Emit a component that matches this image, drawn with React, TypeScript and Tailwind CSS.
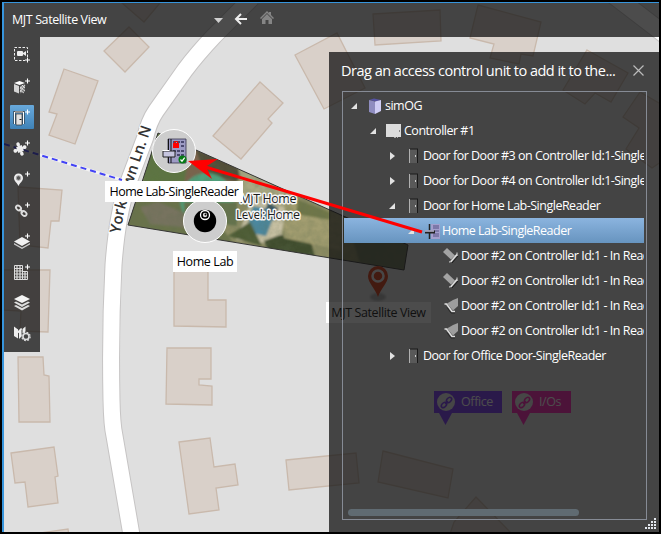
import React from "react";

const buildings = [
  "129,27 149,47 125,72 104,51",
  "122,3 160,3 144,22",
  "64,69 98,81 75,144 49,135 57,114 49,112",
  "18,187 62,190 59,221 51,221 48,248 20,245",
  "4,270 50,270 48,332 20,331 21,311 4,310",
  "18,357 43,357 44,375 49,376 50,422 19,422",
  "11,453 54,447 58,476 55,477 58,503 28,507 25,482 15,483",
  "40,533 68,529 69,536",
  "174,262 208,262 208,300 226,300 226,327 174,326",
  "167,348 211,348 211,379 199,379 199,385 212,386 212,405 166,404",
  "179,442 210,438 214,467 235,464 238,485 216,488 219,510 189,514",
  "286,460 356,453 359,483 289,490",
  "383,451 453,469 448,498 378,482",
  "476,497 512,534 450,534 454,522",
  "260,82 283,103 268,119 272,123 241,159 213,136",
  "295,55 337,33 365,88 324,109",
  "373,14 440,10 441,41 375,45",
  "478,5 541,22 533,56 521,54 519,64 490,58 494,44 470,38",
  "587,50 628,73 611,102 595,93 585,104 563,90",
  "640,92 664,106 664,160 652,168 626,149 639,128 623,117",
];

const road =
  "M252 -2 L214 36 Q197 54 185 70 L156 111 Q149 121 145 138 L127 186 Q117 217 113.500 265 Q110 330 111.500 400 Q112 425 114.500 436 L132 538";

function MapCanvas() {
  return (
    <svg className="absolute inset-0" width="661" height="534" viewBox="0 0 661 534">
      <defs>
        <clipPath id="lot"><path d="M158 133 408 245 404 270 128 225Z" /></clipPath>
        <filter id="soft"><feGaussianBlur stdDeviation="1.300" /></filter>
        <filter id="grass" x="0" y="0" width="100%" height="100%">
          <feTurbulence type="fractalNoise" baseFrequency="0.13" numOctaves="3" seed="4" />
          <feColorMatrix values="0 0 0 0 0.12  0 0 0 0 0.16  0 0 0 0 0.08  1.8 1.2 0 0 -1.1" />
        </filter>
        <path id="street" d="M120 234 L124 213 L132 186 L152 126" />
      </defs>
      <rect width="661" height="534" fill="#dfdfdf" />
      <g fill="#d9d0c9" stroke="#c9b9ac" strokeWidth="1.300">
        {buildings.map((p) => <polygon key={p} points={p} />)}
      </g>
      <path d="M612 -6 680 46" stroke="#c5c3c3" strokeWidth="19" />
      <path d="M612 -6 680 46" stroke="#fff" strokeWidth="17" />
      <path d={road} fill="none" stroke="#c6c4c4" strokeWidth="18" />
      <path d={road} fill="none" stroke="#fff" strokeWidth="16" />
      <path d="M4 144 122 180" stroke="#fff" strokeWidth="3" opacity=".6" />
      <path d="M4 144 122 180" stroke="#4343f5" strokeWidth="2" strokeDasharray="6 4" />
      <g clipPath="url(#lot)">
        <rect x="120" y="130" width="290" height="142" fill="#8d8c63" />
        <g filter="url(#soft)">
          <path d="M150 130 200 150 195 190 140 200Z" fill="#5d7543" />
          <path d="M128 200 200 200 235 245 128 226Z" fill="#6a734c" />
          <path d="M140 207 158 202 190 215 190 228 150 224Z" fill="#77735f" />
          <path d="M190 146 236 165 232 196 184 186Z" fill="#7d634e" />
          <path d="M196 150 245 170 236 182 204 172Z" fill="#514e38" />
          <path d="M238 166 300 190 288 215 244 200Z" fill="#a9a883" />
          <path d="M252 198 286 208 280 245 236 240Z" fill="#c6bfa2" />
          <path d="M253 206 276 211 266 236 246 232Z" fill="#4b88a0" />
          <path d="M268 202 278 208 275 221 264 214Z" fill="#3a5862" />
          <path d="M228 236 250 222 262 246Z" fill="#4d5c36" />
          <path d="M264 241 280 235 310 238 315 258 268 250Z" fill="#3f4d2e" />
          <path d="M285 200 345 215 340 250 284 238Z" fill="#a29d6f" />
          <path d="M298 200 330 212 330 220 296 214Z" fill="#6f774a" />
          <circle cx="207" cy="200" r="27" fill="#48ab86" opacity=".85" />
          <path d="M184 202h53v24l-53-8z" fill="#65734e" />
          <path d="M345 215 410 245 404 270 360 263Z" fill="#6c7554" />
        </g>
        <rect x="120" y="130" width="290" height="142" filter="url(#grass)" opacity=".22" />
      </g>
      <path d="M158 133 408 245 404 270 128 225Z" fill="none" stroke="#363636" />
      <text className="font-['Open_Sans']" fontSize="15" fontWeight="600" fill="#333" stroke="#fff" strokeWidth="2" paintOrder="stroke">
        <textPath href="#street" textLength="111" lengthAdjust="spacingAndGlyphs">Yorktown Ln. N</textPath>
      </text>
      <g className="font-['Open_Sans']" fontSize="12.500" fill="#1c1c1c" stroke="#f4f4f4" strokeWidth="3" paintOrder="stroke" strokeLinejoin="round" textAnchor="middle">
        <text x="268" y="203" textLength="57">MJT Home</text>
        <text x="268" y="219" textLength="64">Level: Home</text>
      </g>
      <ellipse cx="378" cy="297" rx="8" ry="4" fill="#aaa" filter="url(#soft)" />
      <path d="M378 297C375 288 368 283 368 276a10 10 0 0 1 20 0C388 283 381 288 378 297Z" fill="#d83812" />
      <circle cx="378" cy="276" r="5.500" fill="none" stroke="#ececec" strokeWidth="2.500" />
    </svg>
  );
}

function Links({ size = 14 }: { size?: number }) {
  return (
    <svg width={size} height={size} viewBox="0 0 14 14" fill="none" stroke="currentColor" strokeWidth="1.700">
      <ellipse cx="4.300" cy="9.700" rx="3.300" ry="2.200" transform="rotate(-45 4.300 9.700)" />
      <ellipse cx="9.700" cy="4.300" rx="3.300" ry="2.200" transform="rotate(-45 9.700 4.300)" />
      <path d="m5.500 8.500 3-3" />
    </svg>
  );
}

function LinkPin({ text, box, tail }: { text: string; box: string; tail: string }) {
  return (
    <div className={`absolute top-[391px] flex h-[22px] items-center pl-[3px] text-[12.5px] text-white ${box}`}>
      <span className="flex size-[18px] items-center justify-center rounded-full bg-[#e5e5e5]"><Links size={13} /></span>
      <span className="pt-px pl-[6px] tracking-[-0.4px] text-white">{text}</span>
      <svg className={`absolute top-[22px] left-[5px] ${tail}`} width="13" height="12"><path d="M0 0h13L6.500 12Z" fill="currentColor" /></svg>
    </div>
  );
}

function Markers() {
  return (
    <>
      <div className="absolute top-[302px] left-[326px] flex h-[21px] w-[105px] items-center justify-center bg-white pt-[2px] text-[12.5px] tracking-[-0.4px] whitespace-nowrap text-[#111]">MJT Satellite View</div>
      <LinkPin text="Office" box="left-[434px] w-[68px] bg-[#7a36f5] [&>span:first-child]:text-[#7a36f5]" tail="text-[#7a36f5]" />
      <LinkPin text="I/Os" box="left-[512px] w-[59px] bg-[#ff1cb4] [&>span:first-child]:text-[#ff1cb4]" tail="text-[#ff1cb4]" />
      <div className="absolute top-[129px] left-[152px] size-[44px] rounded-full border border-white bg-[#cdcdcd]">
        <svg width="42" height="42" viewBox="153 130 42 42">
          <path d="M168 139h18v24h-18z" fill="#9d9bc4" stroke="#35334c" strokeWidth=".8" />
          <path d="M168.500 139v24M171 139v24" stroke="#111" />
          <g fill="#4b4970">
            <path d="M173 141h3v2h-3zM177 141h3v2h-3zM181 141h3v2h-3zM181 145h3v2h-3zM173 150h3v2h-3zM177 150h3v2h-3zM181 150h3v2h-3zM177 154h3v2h-3zM181 154h3v2h-3z" />
          </g>
          <path d="M173 143h6v5h-6z" fill="#f00" /><path d="M174.500 143v-1.500h3v1.500" fill="none" stroke="#e00" />
          <path d="M163 151h12v6h-12z" fill="#c6c5df" stroke="#222" />
          <path d="M162.500 150.500h7" stroke="#fff" />
          <circle cx="182.500" cy="159.500" r="4" fill="#087b17" />
          <path d="m180.500 159.500 1.500 1.700 2.700-3.600" fill="none" stroke="#fff" strokeWidth="1.200" />
        </svg>
      </div>
      <div className="absolute top-[199px] left-[183px] size-[44px] rounded-full border border-white bg-[#cdcdcd]">
        <svg width="42" height="42" viewBox="184 200 42 42">
          <circle cx="205" cy="221" r="11.200" />
          <circle cx="205" cy="215" r="4.500" fill="none" stroke="#fff" strokeWidth="1.300" />
          <circle cx="205" cy="215" r="2.200" fill="#ddd" /><circle cx="205.500" cy="214.500" r="1" />
        </svg>
      </div>
      <div className="absolute top-[181px] left-[105px] flex h-[21px] w-[138px] items-center justify-center bg-white pt-[2px] text-[12.5px] tracking-[-0.52px] whitespace-nowrap text-black">Home Lab-SingleReader</div>
      <div className="absolute top-[251px] left-[173px] flex h-[21px] w-[64px] items-center justify-center bg-white pt-[2px] text-[12.5px] tracking-[-0.4px] whitespace-nowrap text-black">Home Lab</div>
    </>
  );
}

const plus = <path d="M20.500 0.500v5M18 3h5" stroke="#fff" strokeWidth="1.100" fill="none" />;

const tools: { id: string; art: React.ReactNode }[] = [
  { id: "camera", art: (<g transform="translate(0 -5)"><path d="M7.500 5.500h13v13h-13z" fill="none" stroke="#eee" strokeDasharray="2.500 1.500" /><path d="M18 17h6v5h-6z" fill="#444" /><path d="M20.500 15.500v5M18 18h5" stroke="#fff" /><rect x="10" y="9" width="6" height="5" rx="1" fill="#eee" /><path d="m16 11 3-2v5l-3-2Z" fill="#eee" /></g>) },
  { id: "cube", art: (<><path d="m12.500 3 5.500 2-5.500 2L7 5Z" fill="#fff" /><path d="m7 6 5 2v7.500l-5-2Z" fill="#d5d5d5" /><path d="m13 8 5-2v7.500l-5 2Z" fill="#777" /><path d="m13 9 5 4M13 12l4 3M15 7l3 3M13 14l5-7M13 11l3-4" stroke="#eee" strokeWidth=".8" />{plus}</>) },
  { id: "door", art: (<><path d="M7.500 15V3h9v12" fill="none" stroke="#222" strokeWidth="2" /><path d="M7.500 15V3h9v12" fill="none" stroke="#fff" /><path d="M9 5h6v11H9z" fill="#e1e1e1" stroke="#333" strokeWidth=".7" /><path d="M12.500 10h2v1h-2z" fill="#111" />{plus}</>) },
  { id: "plugin", art: (<><g fill="#eee" transform="rotate(-22 13 9)"><rect x="10" y="6" width="6" height="6" /><path d="M12 7h2V2h-2ZM12 11h2v5h-2ZM8 8h3v2H8ZM15 8h3v2h-3Z" /><circle cx="13" cy="4" r="1.800" /><circle cx="13" cy="14" r="1.800" /><circle cx="8" cy="9" r="1.900" /><circle cx="18" cy="9" r="1.900" /></g>{plus}</>) },
  { id: "pin", art: (<><path d="M11.500 15C10.500 12 7 10.500 7 7a4.500 4.500 0 0 1 9 0C16 10.500 12.500 12 11.500 15Z" fill="#eee" /><circle cx="11.500" cy="7" r="2.300" fill="#555" stroke="#aaa" />{plus}</>) },
  { id: "link", art: (<><g fill="none" stroke="#ddd" strokeWidth="1.800"><ellipse cx="11.500" cy="6" rx="2.800" ry="2.100" transform="rotate(40 11.500 6)" /><ellipse cx="17" cy="11.500" rx="2.800" ry="2.100" transform="rotate(40 17 11.500)" /><path d="m12.500 7 3.500 3.500" /></g>{plus}</>) },
  { id: "layer", art: (<><path d="m7 10 8 4.500 8-4.500v1.500L15 16l-8-4.500Z" fill="#ccc" /><path d="m7 8.500 8-4.500 8 4.500-8 4.500Z" fill="#f1f1f1" />{plus}</>) },
  { id: "building", art: (<><g transform="translate(0 -1)"><path d="M7.500 2.500h8v14h-8zM15.500 8.500h5v8h-5z" fill="none" stroke="#ddd" /><path d="M10 3v13M13 3v13M8 5.500h7M8 8h7M8 11h12M8 14h12M18 9v7" stroke="#ddd" strokeWidth="1.200" /></g>{plus}</>) },
  { id: "layers", art: (<g transform="translate(0 -2)" fill="#ddd"><path d="m7 13 2-1 6 3 6-3 2 1-8 4.500Z" /><path d="m7 9.500 2-1 6 3 6-3 2 1-8 4.500Z" /><path d="m7 6 8-4 8 4-8 4Z" fill="#f4f4f4" /></g>) },
  { id: "settings", art: (<g transform="translate(0 -2.500)"><path d="m7 3 4 3v9l-4-2.500ZM12 6.500 14.500 5v8L12 15.500ZM15.500 5.500 18.500 3v5l-3 2Z" fill="#eee" /><path d="m9.500 6 2 2.500 3-3.500" fill="none" stroke="#eee" strokeWidth="1.500" /><circle cx="19" cy="13" r="3" fill="#444" stroke="#ddd" strokeWidth="1.600" /><circle cx="19" cy="13" r="4.200" fill="none" stroke="#ddd" strokeWidth="1.200" strokeDasharray="1.800 1.500" /></g>) },
];

function Header() {
  return (
    <header className="flex h-[34px] shrink-0 items-center bg-[#101010]/75 pl-2 text-white">
      <span className="w-[202px] pt-px text-[12.5px] tracking-[-0.4px] whitespace-nowrap">MJT Satellite View</span>
      <svg className="shrink-0" width="9" height="5"><path d="M0 0h9L4.500 5Z" fill="#d0d0d0" /></svg>
      <svg className="-mt-[3px] ml-[11px] shrink-0" width="14" height="12" fill="none" stroke="#eee" strokeWidth="2"><path d="M13 6H2M7 1 2 6l5 5" /></svg>
      <svg className="-mt-[5px] ml-[12px] shrink-0" width="14" height="14" viewBox="0 0 14 14" fill="#858585"><path d="M7 0 0 7l1 1 6-6 6 6 1-1-3-3V1H9v1Z" /><path d="m2 8 5-5 5 5v5H8.500V9h-3v4H2Z" /></svg>
    </header>
  );
}

function Toolbar() {
  return (
    <nav className="flex h-[315px] w-9 flex-col items-center bg-[#101010]/75 pt-[2px]">
      {tools.map((t) => (
        <div key={t.id} className="flex h-[31px] w-full shrink-0 items-center justify-center">
          <div className={t.id === "door" ? "size-6 rounded-[1px] bg-linear-to-b from-[#68a9dc] to-[#3f82b7]" : "size-6"}>
            <svg className="-ml-[3px] overflow-visible" width="27" height="24" viewBox="0 -4 27 24">{t.art}</svg>
          </div>
        </div>
      ))}
    </nav>
  );
}

type Icon = "server" | "controller" | "door" | "unit" | "readerIn" | "readerOut";
type Row = { level: number; icon: Icon; text: string; open?: boolean; selected?: boolean };

const rows: Row[] = [
  { level: 0, icon: "server", text: "simOG", open: true },
  { level: 1, icon: "controller", text: "Controller #1", open: true },
  { level: 2, icon: "door", text: "Door for Door #3 on Controller Id:1-SingleReader", open: false },
  { level: 2, icon: "door", text: "Door for Door #4 on Controller Id:1-SingleReader", open: false },
  { level: 2, icon: "door", text: "Door for Home Lab-SingleReader", open: true },
  { level: 3, icon: "unit", text: "Home Lab-SingleReader", open: true, selected: true },
  { level: 4, icon: "readerIn", text: "Door #2 on Controller Id:1 - In Reader" },
  { level: 4, icon: "readerIn", text: "Door #2 on Controller Id:1 - In Reader" },
  { level: 4, icon: "readerOut", text: "Door #2 on Controller Id:1 - In Reader" },
  { level: 4, icon: "readerOut", text: "Door #2 on Controller Id:1 - In Reader" },
  { level: 2, icon: "door", text: "Door for Office Door-SingleReader", open: false },
];

const icons: Record<Icon, React.ReactNode> = {
  server: (<><path d="m2 2 5-1.500L14 2l-5 1.500Z" fill="#5553a0" /><path d="m2 2 6 1.500V16l-6-2Z" fill="#8f8dc0" /><path d="m8 3.500 6-1.500v11l-6 3Z" fill="#cfcdf5" /></>),
  controller: (<><rect x="0" y="1" width="15" height="13" fill="#dcdcdc" /><path d="M13.500 7v2" stroke="#888" /><path d="M8 14.500h2M11 14.500h1" stroke="#aaa" /></>),
  door: (<><path d="M4.500 1v14" stroke="#b0b0b0" /><path d="M5 1h8v14H5z" fill="#595959" /><path d="M12.500 1v14M5 1h8" stroke="#1a1a1a" /><path d="M10.500 7v2" stroke="#ccc" /></>),
  unit: (<><path d="M7 1h9v15H7z" fill="#a39fcd" /><path d="M9 3h6M9 5h6M9 8h6M9 11h6M9 13h6" stroke="#585386" strokeWidth="1.200" /><path d="M5.500 1v15" stroke="#222" strokeWidth="1.500" /><path d="M1 9h10" stroke="#222" strokeWidth="3" /><path d="M1 8h9" stroke="#bbb8d6" strokeWidth="1.500" /></>),
  readerIn: (<><path d="m0 4 4-4 8 7.500-4 4Z" fill="#a3a3a3" /><path d="m8 13.500 6-7" stroke="#ddd" strokeWidth="1.700" /><path d="m6 14 3-.5M14 8V4.500" stroke="#ddd" /><path d="m9 15 6-7" stroke="#111" strokeWidth=".8" /></>),
  readerOut: (<><path d="M15 0v8l-5 4.500L4 5.500 10 2Z" fill="#9d9d9d" /><path d="M1.500 6h2L9 13.500h3" fill="none" stroke="#ddd" strokeWidth="1.600" /><path d="m4 9.500 4 5.500h4" fill="none" stroke="#222" strokeWidth=".8" /></>),
};

function Tree() {
  return (
    <div className="relative flex h-[429px] flex-col border border-[#868b95] px-px pt-px pb-[2px]">
      {rows.map((r, i) => (
        <div key={i} className={`flex h-[25px] w-[300px] shrink-0 items-center overflow-hidden ${r.selected ? "bg-linear-to-b from-[#8bb4df] to-[#6794bf]" : ""}`} style={{ paddingLeft: 4 + r.level * 19 }}>
          <span className="flex w-3 shrink-0 justify-center">
            {r.open !== undefined && (
              <svg width="8" height="8"><path d={r.open ? "M7 1v6H1Z" : "M2 0l5 4-5 4Z"} fill="#e2e2e2" /></svg>
            )}
          </span>
          <svg className="ml-[7px] shrink-0" width="16" height="16">{icons[r.icon]}</svg>
          <span className="ml-[2px] pt-[2px] text-[12.5px] tracking-[-0.5px] whitespace-nowrap">{r.text}</span>
        </div>
      ))}
      <div className="mt-auto mb-px ml-1 h-[7px] w-[231px] rounded-full bg-[#606b72]" />
    </div>
  );
}

function Grip() {
  return (
    <svg className="absolute right-[2px] bottom-[2px]" width="12" height="12">
      {[[9, 0], [6, 3], [9, 3], [3, 6], [6, 6], [9, 6], [0, 9], [3, 9], [6, 9], [9, 9]].map(([x, y]) => (
        <rect key={`${x}-${y}`} x={x} y={y} width="2" height="2" fill="#e4e8ef" />
      ))}
    </svg>
  );
}

function UnitPanel() {
  return (
    <section className="relative mt-[15px] ml-auto h-[480px] w-[330px] bg-[#101010]/75 pr-3 pl-[13px] text-white">
      <div className="flex h-[39px] items-center justify-between pr-[3px]">
        <h2 className="-ml-px -mt-[2px] text-[14.5px] tracking-[-0.5px] whitespace-nowrap">Drag an access control unit to add it to the...</h2>
        <svg className="-mt-[2px] shrink-0" width="11" height="11" stroke="#bbb" strokeWidth="1.200"><path d="m.5.500 10 10M10.500.500l-10 10" /></svg>
      </div>
      <Tree />
      <Grip />
    </section>
  );
}

export default function App() {
  return (
    <div className="relative h-[534px] w-[661px] overflow-hidden bg-black font-['Open_Sans','Noto_Sans',sans-serif]">
      <div className="absolute inset-0 [clip-path:inset(3px_2px_2px_4px)]">
        <MapCanvas />
        <Markers />
      </div>
      <div className="relative mt-[2px] mr-[2px] ml-[2px] flex h-[530px] flex-col border-t border-l-2 border-[#3795dc]">
        <Header />
        <div className="flex items-start">
          <Toolbar />
          <UnitPanel />
        </div>
      </div>
      <svg className="pointer-events-none absolute inset-0" width="661" height="534">
        <path d="M202 166 422 232" stroke="#f00" strokeWidth="3" />
        <path d="M188 161 218 159 206 166.500 212 179Z" fill="#f00" />
      </svg>
    </div>
  );
}
